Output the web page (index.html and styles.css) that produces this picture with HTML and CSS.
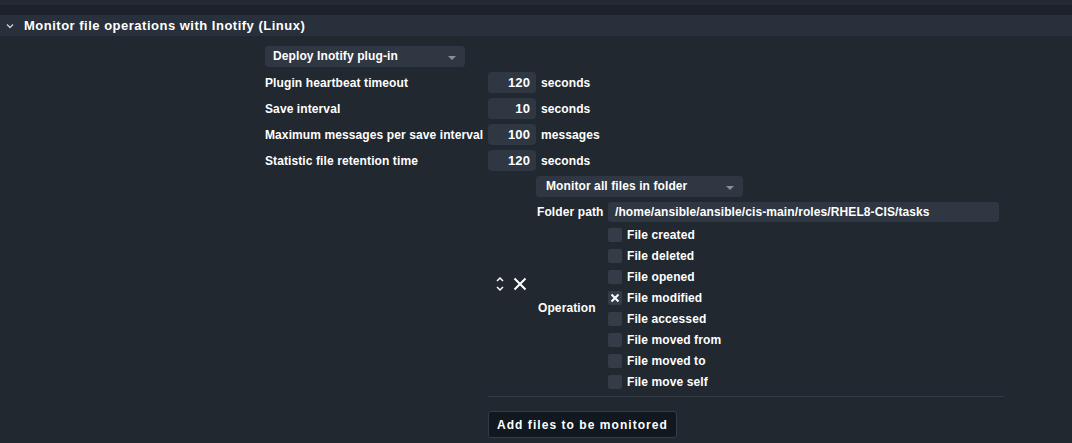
FILE: index.html
```html
<!DOCTYPE html>
<html lang="en">
<head>
    <meta charset="UTF-8">
    <title>Monitor file operations with Inotify (Linux)</title>
    <link rel="stylesheet" href="styles.css">
</head>
<body>
    <div class="topbar"></div>
    <div class="gap"></div>

    <div class="section_head">
        <svg class="chevron" width="8" height="6" viewBox="0 0 8 6"><path d="M1 1.5 L4 4.5 L7 1.5" fill="none" stroke="#c8ccd2" stroke-width="1.4"/></svg>
        <span>Monitor file operations with Inotify (Linux)</span>
    </div>

    <div class="form">
        <div class="select wide">Deploy Inotify plug-in<span class="arrow"></span></div>

        <div class="row">
            <div class="label">Plugin heartbeat timeout</div>
            <div class="num">120</div>
            <div class="unit">seconds</div>
        </div>
        <div class="row">
            <div class="label">Save interval</div>
            <div class="num">10</div>
            <div class="unit">seconds</div>
        </div>
        <div class="row">
            <div class="label">Maximum messages per save interval</div>
            <div class="num">100</div>
            <div class="unit">messages</div>
        </div>
        <div class="row">
            <div class="label">Statistic file retention time</div>
            <div class="num">120</div>
            <div class="unit">seconds</div>
        </div>

        <div class="entry">
            <div class="entry_ctrl">
                <svg width="10" height="16" viewBox="0 0 10 16"><path d="M2 5 L5 2 L8 5 M2 11 L5 14 L8 11" fill="none" stroke="#fff" stroke-width="1.5"/></svg>
                <svg width="14" height="14" viewBox="0 0 14 14"><path d="M1.5 1.5 L12.5 12.5 M12.5 1.5 L1.5 12.5" fill="none" stroke="#fff" stroke-width="2"/></svg>
            </div>
            <div class="entry_body">
                <div class="select mid">Monitor all files in folder<span class="arrow"></span></div>
                <div class="path_row">
                    <div class="sub_label">Folder path</div>
                    <div class="path">/home/ansible/ansible/cis-main/roles/RHEL8-CIS/tasks</div>
                </div>
                <div class="op_row">
                    <div class="sub_label">Operation</div>
                    <div class="checks">
                        <div class="check"><span class="box"></span>File created</div>
                        <div class="check"><span class="box"></span>File deleted</div>
                        <div class="check"><span class="box"></span>File opened</div>
                        <div class="check"><span class="box on"><svg width="10" height="10" viewBox="0 0 10 10"><path d="M1.5 1.5 L8.5 8.5 M8.5 1.5 L1.5 8.5" fill="none" stroke="#fff" stroke-width="2"/></svg></span>File modified</div>
                        <div class="check"><span class="box"></span>File accessed</div>
                        <div class="check"><span class="box"></span>File moved from</div>
                        <div class="check"><span class="box"></span>File moved to</div>
                        <div class="check"><span class="box"></span>File move self</div>
                    </div>
                </div>
            </div>
        </div>

        <div class="sep"></div>
        <button class="add_btn">Add files to be monitored</button>
    </div>
</body>
</html>
```

FILE: styles.css
```css
body {
    margin: 0;
    background: #222830;
    color: #fff;
    font-family: "Liberation Sans", Arial, sans-serif;
    font-size: 12px;
    font-weight: bold;
    letter-spacing: 0.1px;
}
.topbar {
    height: 5px;
    background: #242a33;
}
.gap {
    height: 10px;
    background: #1d2129;
}
.section_head {
    height: 21px;
    background: #28303b;
    display: flex;
    align-items: center;
    font-size: 13px;
    letter-spacing: 0.5px;
}
.chevron {
    margin: 1px 10px 0 6px;
}
.form {
    margin-left: 265px;
    padding-top: 10px;
}
.select {
    position: relative;
    height: 21px;
    line-height: 21px;
    background: #2f3743;
    border-radius: 4px;
    padding-left: 8px;
    box-sizing: border-box;
}
.select.wide {
    width: 200px;
}
.select.mid {
    width: 207px;
    padding-left: 10px;
}
.arrow {
    position: absolute;
    right: 9px;
    top: 10px;
    border-left: 4px solid transparent;
    border-right: 4px solid transparent;
    border-top: 4px solid #8a9099;
}
.row {
    display: flex;
    align-items: center;
    margin-top: 5px;
    height: 21px;
}
.label {
    width: 223px;
}
.num {
    width: 48px;
    height: 21px;
    line-height: 21px;
    background: #2f3743;
    border-radius: 4px;
    text-align: right;
    padding-right: 6px;
    box-sizing: border-box;
    font-size: 13px;
}
.unit {
    margin-left: 5px;
}
.entry {
    display: flex;
    align-items: center;
    margin-left: 223px;
    margin-top: 5px;
}
.entry_ctrl {
    width: 48px;
    display: flex;
    align-items: center;
    gap: 8px;
    padding-left: 7px;
    box-sizing: border-box;
}
.entry_body {
    flex: 1;
}
.path_row {
    display: flex;
    align-items: center;
    margin-top: 5px;
}
.sub_label {
    width: 72px;
    padding-left: 1px;
    box-sizing: border-box;
}
.path {
    width: 391px;
    height: 20px;
    line-height: 20px;
    background: #2f3743;
    border-radius: 3px;
    padding-left: 7px;
    box-sizing: border-box;
}
.op_row {
    display: flex;
    align-items: center;
    margin-top: 2px;
}
.op_row .sub_label {
    padding-left: 2px;
}
.check {
    display: flex;
    align-items: center;
    height: 21px;
}
.box {
    width: 14px;
    height: 14px;
    background: #343c48;
    border-radius: 2px;
    margin-right: 5px;
    display: flex;
    align-items: center;
    justify-content: center;
}
.sep {
    width: 516px;
    height: 1px;
    background: #333b46;
    margin: 4px 0 0 223px;
}
.add_btn {
    display: block;
    margin: 14px 0 0 223px;
    height: 27px;
    padding: 0 8px;
    background: #121820;
    border: 1px solid #343c47;
    border-radius: 3px;
    color: #fff;
    font-family: "Liberation Sans", Arial, sans-serif;
    font-size: 12px;
    font-weight: bold;
    letter-spacing: 1.05px;
}
```
